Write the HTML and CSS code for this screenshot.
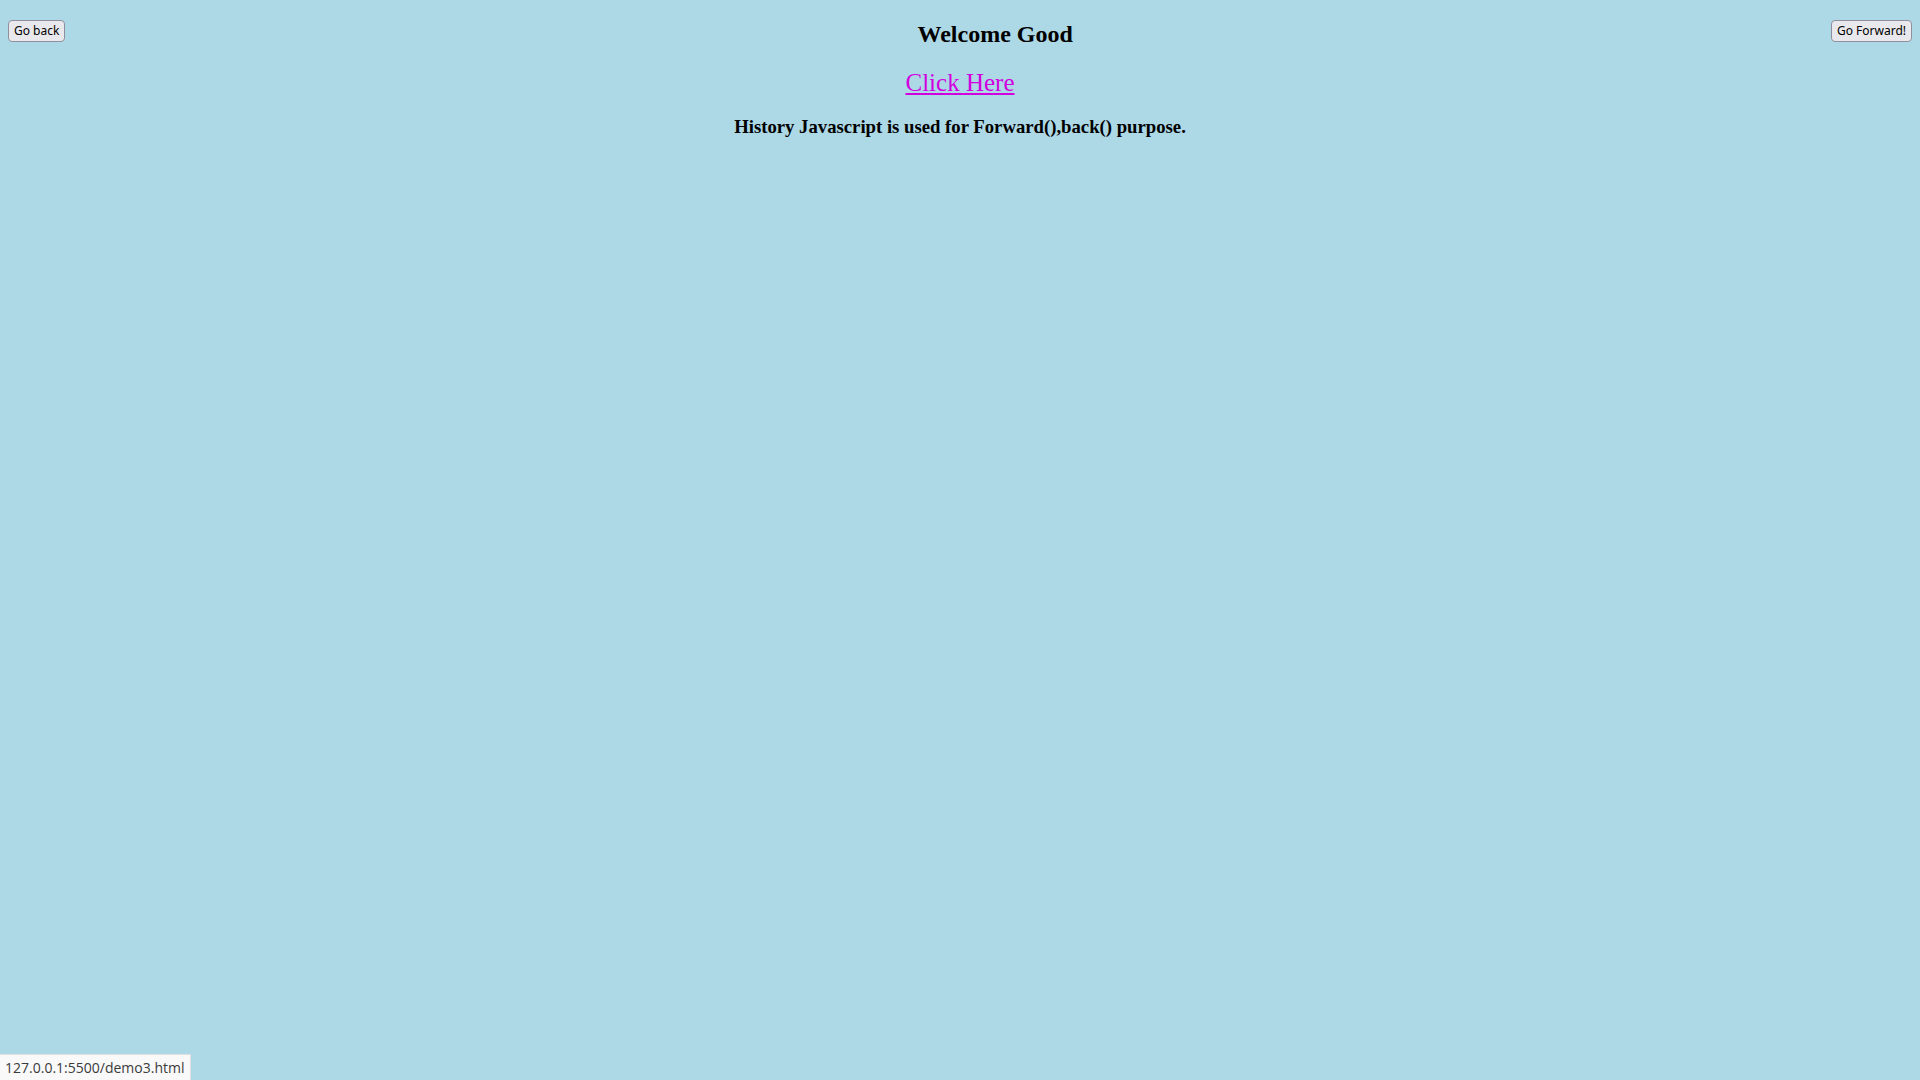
FILE: index.html
```html
<!DOCTYPE html>
<html>
<head>
<meta charset="utf-8">
<title>demo3</title>
<link rel="stylesheet" href="styles.css">
</head>
<body>
<div class="top">
  <button class="btn">Go back</button>
  <h2 class="title">Welcome Good</h2>
  <button class="btn">Go Forward!</button>
</div>
<div class="linkrow"><a class="link" href="#">Click Here</a></div>
<h3 class="info">History Javascript is used for Forward(),back() purpose.</h3>
<div class="status">127.0.0.1:5500/demo3.html</div>
</body>
</html>
```
FILE: styles.css
```css
html, body {
  margin: 0;
  padding: 0;
  height: 100%;
}
body {
  background: #add8e6;
  font-family: "Liberation Serif", "Times New Roman", serif;
  color: #000;
}
.top {
  display: flex;
  align-items: flex-start;
  padding: 20px 8px 0 8px;
}
.btn {
  font-family: "Noto Sans", "Open Sans", sans-serif;
  font-size: 12px;
  line-height: 18px;
  height: 22px;
  padding: 1px 5px;
  color: #000;
  background: #e9e9ed;
  border: 1px solid #8f8f9d;
  border-radius: 4px;
  box-sizing: border-box;
  cursor: pointer;
}
.title {
  flex: 1;
  margin: 0;
  padding-left: 94px;
  text-align: center;
  font-size: 24px;
  line-height: 28px;
  font-weight: bold;
}
.linkrow {
  margin-top: 20px;
  text-align: center;
  font-size: 25px;
  line-height: 30px;
}
.link {
  color: #d200df;
  text-decoration: underline;
}
.info {
  margin: 18px 0 0 0;
  text-align: center;
  font-size: 18.72px;
  line-height: 22px;
  font-weight: bold;
}
.status {
  position: fixed;
  left: 0;
  bottom: 0;
  height: 26px;
  padding: 0 6px 0 5px;
  box-sizing: border-box;
  background: #f9f9fa;
  border-top: 1px solid #e0e0e0;
  border-right: 1px solid #e0e0e0;
  font-family: "Open Sans", "Noto Sans", sans-serif;
  font-size: 14px;
  line-height: 25px;
  color: #3b3b3b;
}
```
